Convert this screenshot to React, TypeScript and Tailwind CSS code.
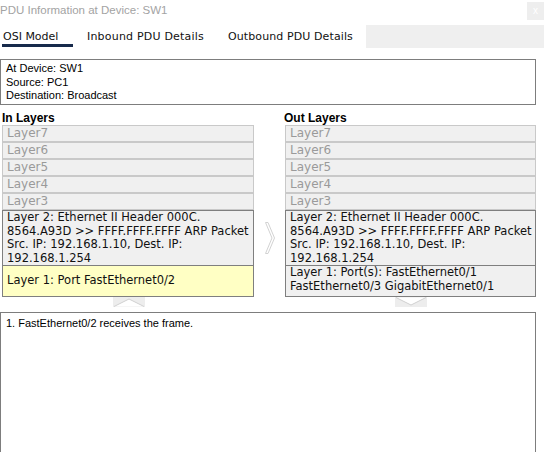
import React from 'react';

const layerFont = { fontFamily: '"DejaVu Sans", Verdana, sans-serif' };

function GhostLayers() {
    const names = ["Layer7", "Layer6", "Layer5", "Layer4", "Layer3"];
    return (
        <div className="flex flex-col">
            {names.map((n) => (
                <div key={n} className="h-[17px] border border-[#c9c9c9] bg-[#f0f0f0] pl-[4px] text-[12px] leading-[15px] text-[#9a9a9a]">
                    {n}
                </div>
            ))}
        </div>
    );
}

function Layer2() {
    return (
        <div className="h-[56px] border border-[#7f7f7f] bg-[#f0f0f0] pl-[4px] text-[11.5px] leading-[13.5px] text-[#111] whitespace-nowrap overflow-hidden">
            Layer 2: Ethernet II Header 000C.<br />
            8564.A93D &gt;&gt; FFFF.FFFF.FFFF ARP Packet<br />
            Src. IP: 192.168.1.10, Dest. IP:<br />
            192.168.1.254
        </div>
    );
}

function Chevron({ up }: { up: boolean }) {
    return (
        <svg width="32" height="10" viewBox="0 0 32 10">
            <rect x="0" y="0" width="32" height="10" fill="#ededed" />
            {up ? (
                <polyline points="1,9.5 16,2 31,9.5" fill="#fff" stroke="#d0d0d0" strokeWidth="1" />
            ) : (
                <polyline points="1,0.5 16,8 31,0.5" fill="#fff" stroke="#d0d0d0" strokeWidth="1" />
            )}
        </svg>
    );
}

export default function App() {
    return (
        <div className="w-[544px] h-[452px] bg-white overflow-hidden" style={{ fontFamily: '"Liberation Sans", Arial, sans-serif' }}>
            {/* title bar */}
            <div className="h-[25px] flex justify-between items-start">
                <div className="pt-[3px] text-[11.5px] leading-[15px] text-[#a3a3a3]">PDU Information at Device: SW1</div>
                <div className="mt-[2px] w-[17px] h-[18px] bg-[#eeeeee] flex items-center justify-center text-[10px] leading-none text-white">x</div>
            </div>

            {/* tabs */}
            <div className="flex h-[23px] text-[11px] leading-[14px] text-[#111]" style={layerFont}>
                <div className="ml-[2px] w-[71px] h-[22px] border-b-[3px] border-[#172a4b] pl-[1px] pt-[5px]">OSI Model</div>
                <div className="ml-[14px] w-[141px] pt-[5px] tracking-[0.2px]">Inbound PDU Details</div>
                <div className="w-[138px] pt-[5px] tracking-[0.1px]">Outbound PDU Details</div>
                <div className="flex-1 bg-[#efefef]"></div>
            </div>

            {/* device info */}
            <div className="mt-[11px] w-[536px] h-[46px] border border-[#7d7d7d] pl-[5px] pt-[2px] text-[11px] leading-[13.5px] text-black">
                <div>At Device: SW1</div>
                <div>Source: PC1</div>
                <div>Destination: Broadcast</div>
            </div>

            {/* layers */}
            <div className="mt-[6px] w-[536px] grid grid-cols-[2px_252px_31px_251px]">
                <div></div>
                <div className="flex flex-col">
                    <div className="h-[14px] text-[12px] leading-[14px] font-bold text-black">In Layers</div>
                    <div style={layerFont}>
                        <GhostLayers />
                        <Layer2 />
                        <div className="h-[31px] border border-t-0 border-[#7f7f7f] bg-[#ffffc4] pl-[4px] flex items-center text-[11.5px] text-[#111] whitespace-nowrap">
                            Layer 1: Port FastEthernet0/2
                        </div>
                    </div>
                    <div className="flex justify-center pl-[2px]">
                        <Chevron up={true} />
                    </div>
                </div>
                <div className="flex justify-center pt-[111px]">
                    <svg width="10" height="32" viewBox="0 0 10 32">
                        <polygon points="0.5,0.5 3,0.5 9.5,16 3,31.5 0.5,31.5 7,16" fill="#fff" stroke="#d2d2d2" strokeWidth="1" />
                    </svg>
                </div>
                <div className="flex flex-col">
                    <div className="-ml-[1px] h-[14px] text-[12px] leading-[14px] font-bold text-black">Out Layers</div>
                    <div style={layerFont}>
                        <GhostLayers />
                        <Layer2 />
                        <div className="h-[31px] border border-t-0 border-[#7f7f7f] bg-[#f0f0f0] pl-[4px] text-[11.5px] leading-[13.5px] text-[#111] whitespace-nowrap overflow-hidden">
                            Layer 1: Port(s): FastEthernet0/1<br />
                            FastEthernet0/3 GigabitEthernet0/1
                        </div>
                    </div>
                    <div className="flex justify-center">
                        <Chevron up={false} />
                    </div>
                </div>
            </div>

            {/* explanation */}
            <div className="mt-[5px] w-[536px] h-[160px] border border-[#7d7d7d] pl-[5px] pt-[3px] text-[11px] leading-[14px] text-black">
                1. FastEthernet0/2 receives the frame.
            </div>
        </div>
    );
}
